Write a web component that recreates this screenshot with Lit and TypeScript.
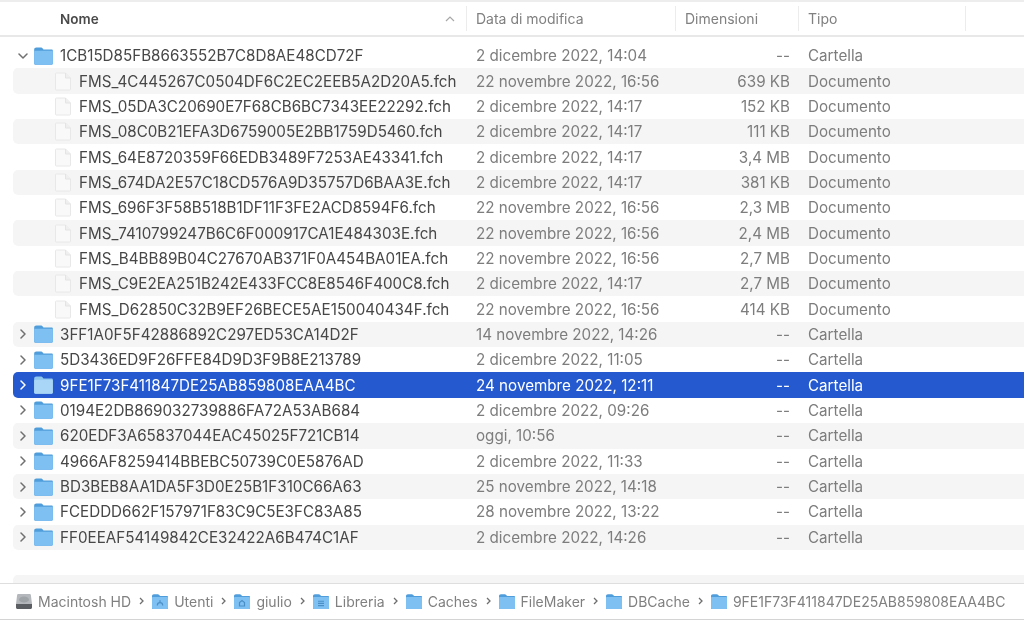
import { LitElement, html, css, svg } from "lit";
import { customElement } from "lit/decorators.js";

type Row = { name: string; date: string; size: string; kind: "Cartella" | "Documento"; open?: boolean; sel?: boolean };

const doc = (name: string, date: string, size: string): Row => ({ name, date, size, kind: "Documento" });
const dir = (name: string, date: string, extra: Partial<Row> = {}): Row => ({ name, date, size: "--", kind: "Cartella", ...extra });

const ROWS: Row[] = [
  dir("1CB15D85FB8663552B7C8D8AE48CD72F", "2 dicembre 2022, 14:04", { open: true }),
  doc("FMS_4C445267C0504DF6C2EC2EEB5A2D20A5.fch", "22 novembre 2022, 16:56", "639 KB"),
  doc("FMS_05DA3C20690E7F68CB6BC7343EE22292.fch", "2 dicembre 2022, 14:17", "152 KB"),
  doc("FMS_08C0B21EFA3D6759005E2BB1759D5460.fch", "2 dicembre 2022, 14:17", "111 KB"),
  doc("FMS_64E8720359F66EDB3489F7253AE43341.fch", "2 dicembre 2022, 14:17", "3,4 MB"),
  doc("FMS_674DA2E57C18CD576A9D35757D6BAA3E.fch", "2 dicembre 2022, 14:17", "381 KB"),
  doc("FMS_696F3F58B518B1DF11F3FE2ACD8594F6.fch", "22 novembre 2022, 16:56", "2,3 MB"),
  doc("FMS_7410799247B6C6F000917CA1E484303E.fch", "22 novembre 2022, 16:56", "2,4 MB"),
  doc("FMS_B4BB89B04C27670AB371F0A454BA01EA.fch", "22 novembre 2022, 16:56", "2,7 MB"),
  doc("FMS_C9E2EA251B242E433FCC8E8546F400C8.fch", "2 dicembre 2022, 14:17", "2,7 MB"),
  doc("FMS_D62850C32B9EF26BECE5AE150040434F.fch", "22 novembre 2022, 16:56", "414 KB"),
  dir("3FF1A0F5F42886892C297ED53CA14D2F", "14 novembre 2022, 14:26"),
  dir("5D3436ED9F26FFE84D9D3F9B8E213789", "2 dicembre 2022, 11:05"),
  dir("9FE1F73F411847DE25AB859808EAA4BC", "24 novembre 2022, 12:11", { sel: true }),
  dir("0194E2DB869032739886FA72A53AB684", "2 dicembre 2022, 09:26"),
  dir("620EDF3A65837044EAC45025F721CB14", "oggi, 10:56"),
  dir("4966AF8259414BBEBC50739C0E5876AD", "2 dicembre 2022, 11:33"),
  dir("BD3BEB8AA1DA5F3D0E25B1F310C66A63", "25 novembre 2022, 14:18"),
  dir("FCEDDD662F157971F83C9C5E3FC83A85", "28 novembre 2022, 13:22"),
  dir("FF0EEAF54149842CE32422A6B474C1AF", "2 dicembre 2022, 14:26"),
];

const PATH: { label: string; icon: "disk" | "user" | "home" | "lib" | "plain" }[] = [
  { label: "Macintosh HD", icon: "disk" },
  { label: "Utenti", icon: "user" },
  { label: "giulio", icon: "home" },
  { label: "Libreria", icon: "lib" },
  { label: "Caches", icon: "plain" },
  { label: "FileMaker", icon: "plain" },
  { label: "DBCache", icon: "plain" },
  { label: "9FE1F73F411847DE25AB859808EAA4BC", icon: "plain" },
];

const folder = (cls: string, mark = "") => html`<svg class=${cls} viewBox="0 0 18 17">
  <path class="f-back" d="M1 3.200C1 1.900 1.700 1.200 3 1.200h3.600c.8 0 1.200.3 1.700.9l.7.8H16c.6 0 1 .4 1 1V15c0 .6-.4 1-1 1H2c-.6 0-1-.4-1-1z"/>
  <path class="f-front" d="M1 5c0-.6.4-1 1-1h14c.6 0 1 .4 1 1V15c0 .6-.4 1-1 1H2c-.6 0-1-.4-1-1z"/>
  ${mark === "user" ? svg`<path d="M6.300 12.500c0-3.800 5.400-3.800 5.400 0M9 7.200v2" fill="none" stroke="#4a8fc6" stroke-width="1.200"/>` : ""}
  ${mark === "home" ? svg`<path d="M6.500 13V9.600L9 7.600l2.500 2V13z" fill="none" stroke="#4a8fc6" stroke-width="1.200"/>` : ""}
  ${mark === "lib" ? svg`<path d="M6 8.200h6M6 10.400h6M6 12.600h6" fill="none" stroke="#4a8fc6" stroke-width="1.100"/>` : ""}
</svg>`;

const disk = html`<svg class="crumb-icon" viewBox="0 0 18 17">
  <path d="M3.200 1h11.600c.6 0 1 .3 1.100.9L17 11H1l1.100-9.100C2.200 1.300 2.600 1 3.200 1z" fill="#b4b8bc"/>
  <ellipse cx="9" cy="6.500" rx="5" ry="3" fill="#9ea3a8"/>
  <path d="M1 11h16v3.500c0 .8-.6 1.500-1.500 1.500h-13C1.600 16 1 15.300 1 14.500z" fill="#5b5e62"/>
</svg>`;

const fileIcon = html`<svg class="file" viewBox="0 0 16 18">
  <path d="M.5 1.200C.5.800.8.500 1.200.500h9.300l5 5v11.300c0 .4-.3.700-.7.700H1.200c-.4 0-.7-.3-.7-.7z" fill="#f9f9f9" stroke="#e8e8e8"/>
  <path d="M10.500.500v5h5" fill="#efefef" stroke="#e4e4e4"/>
</svg>`;

const chevron = (open: boolean) => html`<svg class="chev" viewBox="0 0 10 10">
  <path d=${open ? "M1 3l4 4 4-4" : "M3 1l4 4-4 4"} fill="none" stroke="currentColor" stroke-width="1.500" stroke-linecap="round" stroke-linejoin="round"/>
</svg>`;

@customElement("app-root")
export class AppRoot extends LitElement {
  static styles = css`
    :host {
      display: flex;
      flex-direction: column;
      width: 1024px;
      height: 620px;
      overflow: hidden;
      background: #fff;
      font-family: Inter, "Liberation Sans", sans-serif;
      font-size: 15.200px;
      color: #4a4a4a;
      filter: blur(0.3px);
    }
    .head {
      display: grid;
      grid-template-columns: 466px 209px 123px 167px 1fr;
      height: 33px;
      flex: none;
      border-top: 2px solid #ededed;
      border-bottom: 2px solid #e8e8e8;
      align-items: center;
      color: #808080;
      font-size: 14px;
    }
    .hc {
      height: 25px;
      display: flex;
      align-items: center;
      padding-left: 9px;
      border-left: 1px solid #ececec;
    }
    .hc.first {
      border-left: none;
      padding-left: 60px;
      padding-right: 11px;
      justify-content: space-between;
      color: #4a4a4a;
      font-weight: 600;
      font-size: 13.500px;
    }
    .hc.last { padding-left: 0; }
    .sort { width: 10px; height: 6px; color: #a8a8a8; }
    .list {
      flex: 1;
      overflow: hidden;
      padding-top: 6px;
    }
    .row {
      display: grid;
      grid-template-columns: 454px 208px 123px 1fr;
      height: 25.350px;
      margin-left: 13px;
      align-items: center;
      border-radius: 5px 0 0 5px;
      color: #7d7d7d;
      white-space: nowrap;
    }
    .row.odd { background: #f5f5f5; }
    .row.sel { background: #2459cf; color: #fff; }
    .name {
      display: flex;
      align-items: center;
      color: #474747;
      min-width: 0;
    }
    .sel .name { color: #fff; }
    .chev { width: 10px; height: 10px; margin-left: 5px; flex: none; color: #707070; }
    .sel .chev { color: #fff; }
    .icon { width: 21px; height: 20px; margin-left: 5px; margin-right: 6px; flex: none; }
    .f-back { fill: #4f9ddb; }
    .f-front { fill: #7fc0f3; }
    .sel .f-back { fill: #8fc6ee; }
    .sel .f-front { fill: #a9d6f6; }
    .file { width: 16px; height: 19px; margin-left: 42px; margin-right: 8px; flex: none; }
    .date { padding-left: 9px; }
    .size { text-align: right; padding-right: 8px; }
    .kind { padding-left: 10px; }
    .bar {
      flex: none;
      height: 34px;
      padding-bottom: 1px;
      border-top: 1px solid #dedede;
      border-bottom: 1px solid #d4d4d4;
      display: flex;
      align-items: center;
      padding-left: 15px;
      color: #808080;
      font-size: 14px;
      white-space: nowrap;
    }
    .crumb { display: flex; align-items: center; }
    .crumb-icon { width: 18px; height: 17px; margin-right: 5px; flex: none; }
    .sep { width: 7px; height: 8px; margin: 0 6px 0 7px; color: #6e6e6e; flex: none; }
  `;

  render() {
    return html`
      <div class="head">
        <div class="hc first"><span>Nome</span>
          <svg class="sort" viewBox="0 0 10 6"><path d="M1 5l4-4 4 4" fill="none" stroke="currentColor" stroke-width="1.200"/></svg>
        </div>
        <div class="hc">Data di modifica</div>
        <div class="hc">Dimensioni</div>
        <div class="hc">Tipo</div>
        <div class="hc last"></div>
      </div>
      <div class="list">
        ${ROWS.map((r, i) => html`
          <div class="row ${i % 2 === 1 ? "odd" : ""} ${r.sel ? "sel" : ""}">
            <div class="name">
              ${r.kind === "Cartella"
                ? html`${chevron(!!r.open)}${folder("icon")}`
                : fileIcon}
              <span>${r.name}</span>
            </div>
            <div class="date">${r.date}</div>
            <div class="size">${r.size}</div>
            <div class="kind">${r.kind}</div>
          </div>`)}
        <div class="row"></div>
        <div class="row odd"></div>
      </div>
      <div class="bar">
        ${PATH.map((p, i) => html`
          <div class="crumb">
            ${p.icon === "disk" ? disk : folder("crumb-icon", p.icon)}
            <span>${p.label}</span>
            ${i < PATH.length - 1
              ? html`<svg class="sep" viewBox="0 0 7 8"><path d="M2 1l3 3-3 3" fill="none" stroke="currentColor" stroke-width="1.300"/></svg>`
              : ""}
          </div>`)}
      </div>
    `;
  }
}
